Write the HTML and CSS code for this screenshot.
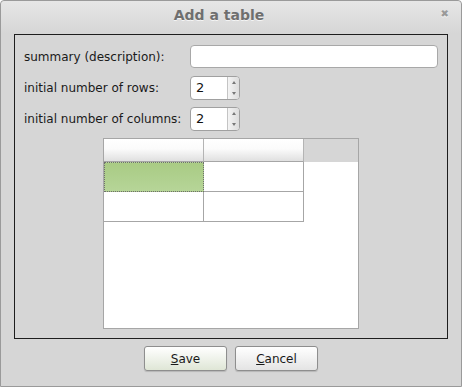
FILE: index.html
```html
<!DOCTYPE html>
<html lang="en">
<head>
    <meta charset="UTF-8">
    <title>Add a table</title>
    <link rel="stylesheet" href="styles.css">
</head>
<body>
    <div class="ventana">
        <div class="titulo">
            <span class="tituloTexto">Add a table</span>
            <span class="cerrar">&#x2716;</span>
        </div>
        <div class="panel">
            <div class="fila">
                <label>summary (description):</label>
                <input class="texto" type="text">
            </div>
            <div class="fila">
                <label>initial number of rows:</label>
                <div class="spin">
                    <span class="valor">2</span>
                    <span class="flechas">
                        <svg width="6" height="20" viewBox="0 0 6 20"><path d="M1 6 L3 3 L5 6 Z" fill="#777"/><path d="M1 14 L3 17 L5 14 Z" fill="#777"/></svg>
                    </span>
                </div>
            </div>
            <div class="fila">
                <label>initial number of columns:</label>
                <div class="spin">
                    <span class="valor">2</span>
                    <span class="flechas">
                        <svg width="6" height="20" viewBox="0 0 6 20"><path d="M1 6 L3 3 L5 6 Z" fill="#777"/><path d="M1 14 L3 17 L5 14 Z" fill="#777"/></svg>
                    </span>
                </div>
            </div>
            <div class="tabla">
                <div class="cabecera">
                    <div class="celdaCab"></div>
                    <div class="celdaCab"></div>
                </div>
                <div class="filaTabla">
                    <div class="celda elegida"></div>
                    <div class="celda"></div>
                </div>
                <div class="filaTabla">
                    <div class="celda"></div>
                    <div class="celda"></div>
                </div>
            </div>
        </div>
        <div class="botones">
            <button class="boton guardar"><u>S</u>ave</button>
            <button class="boton"><u>C</u>ancel</button>
        </div>
    </div>
</body>
</html>
```

FILE: styles.css
```css
* {
    box-sizing: border-box;
    font-family: 'DejaVu Sans', Verdana, sans-serif;
}
body {
    margin: 0;
}
.ventana {
    width: 462px;
    height: 387px;
    border: 1px solid #9a9a9a;
    border-radius: 4px 4px 0 0;
    background-color: #d6d6d6;
}
.titulo {
    height: 33px;
    display: flex;
    align-items: center;
    justify-content: center;
    padding: 0 24px 6px 0;
    position: relative;
    background: linear-gradient(#e6e6e6, #d6d6d6);
    border-radius: 4px 4px 0 0;
}
.tituloTexto {
    font-size: 14px;
    font-weight: bold;
    color: #6f6f6f;
    text-shadow: 0 1px 0 #f4f4f4;
}
.cerrar {
    position: absolute;
    right: 12px;
    top: 7px;
    font-size: 10px;
    color: #9a9a9a;
    text-shadow: 0 1px 0 #f4f4f4;
}
.panel {
    margin: 0 13px;
    height: 305px;
    border: 1px solid #1e1e1e;
    padding: 10px 9px 0 9px;
}
.fila {
    display: flex;
    align-items: center;
    height: 23px;
    margin-bottom: 8px;
}
.fila label {
    width: 166px;
    font-size: 12px;
    color: #1a1a1a;
}
.texto {
    flex: 1;
    height: 23px;
    border: 1px solid #a8a8a8;
    border-radius: 4px;
    background-color: white;
    margin: 0;
}
.spin {
    display: flex;
    width: 50px;
    height: 24px;
    border: 1px solid #a0a0a0;
    border-radius: 4px;
    background-color: white;
    overflow: hidden;
}
.valor {
    flex: 1;
    padding: 3px 0 0 5px;
    font-size: 13px;
    color: #111;
}
.flechas {
    width: 12px;
    display: flex;
    align-items: center;
    justify-content: center;
    border-left: 1px solid #c4c4c4;
    background: linear-gradient(to right, #f4f4f4, #dcdcdc);
}
.tabla {
    width: 256px;
    height: 191px;
    margin: 7px auto 0 auto;
    border: 1px solid #a6a6a6;
    background-color: white;
}
.cabecera {
    display: flex;
    height: 23px;
    background-color: #d6d6d6;
}
.celdaCab {
    width: 100px;
    border-right: 1px solid #b4b4b4;
    border-bottom: 1px solid #a6a6a6;
    background: linear-gradient(#ffffff 0%, #fbfbfb 45%, #e0e0e0 100%);
}
.filaTabla {
    display: flex;
}
.celda {
    width: 100px;
    height: 30px;
    border-right: 1px solid #a6a6a6;
    border-bottom: 1px solid #a6a6a6;
}
.elegida {
    background: linear-gradient(#a9cb84, #b6d598);
    border: 1px dotted #6e6e6e;
}
.botones {
    display: flex;
    justify-content: center;
    gap: 8px;
    padding-top: 7px;
}
.boton {
    width: 83px;
    height: 25px;
    border: 1px solid #8e8e8e;
    border-radius: 3px;
    background: linear-gradient(#ffffff, #e4e4e4);
    font-size: 12px;
    color: #1a1a1a;
    padding: 0;
    box-shadow: 0 1px 1px rgba(0, 0, 0, 0.15);
}
.guardar {
    background: linear-gradient(#ffffff, #dfe6d6);
}
```
